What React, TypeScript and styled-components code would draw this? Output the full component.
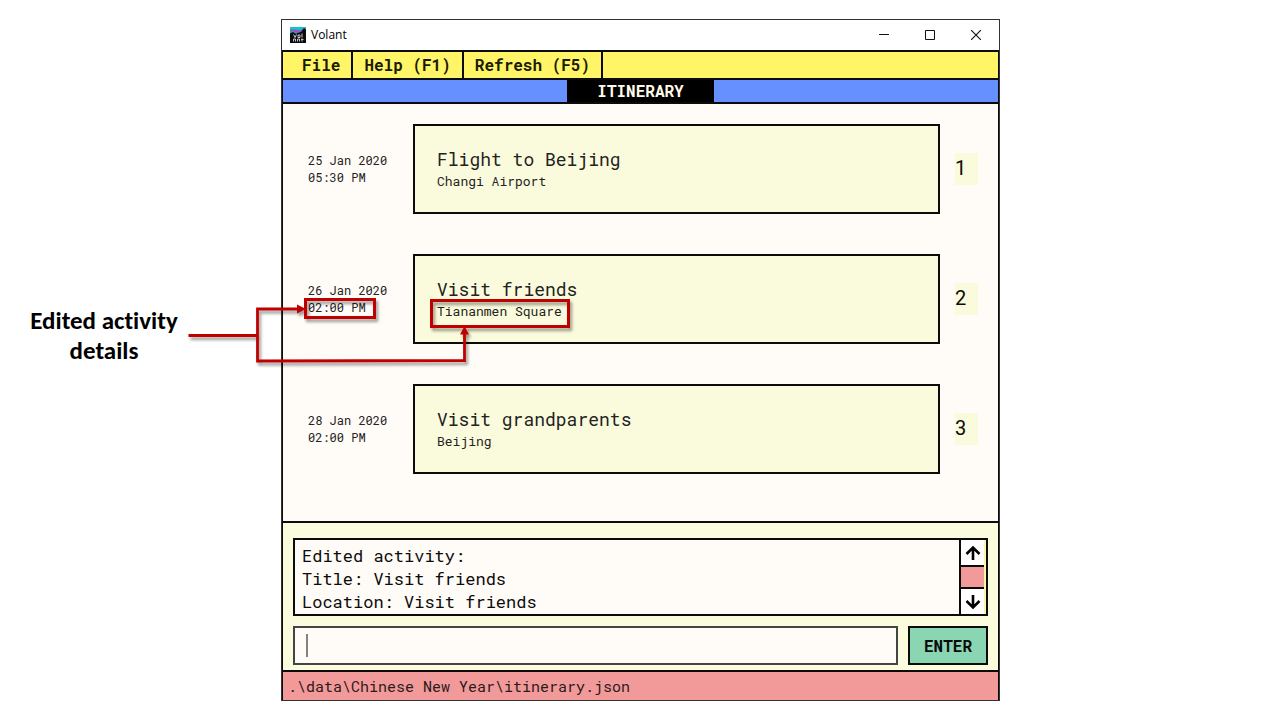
import React from 'react';
import styled, { createGlobalStyle, css } from 'styled-components';

const ink = '#0b0b0b';
const mono = '"Roboto Mono", "DejaVu Sans Mono", monospace';

const GlobalStyle = createGlobalStyle`
  * { box-sizing: border-box; }
  body { margin: 0; background: #fff; }
  button, input { font: inherit; color: inherit; margin: 0; padding: 0; border: 0; border-radius: 0; background: none; }
`;

const Stage = styled.div`
  position: relative;
  display: grid;
  grid-template-columns: 281px minmax(480px, 1fr) 280px;
  padding: 19px 0;
`;

const Note = styled.p`
  align-self: start;
  width: 160px;
  margin: 287px 0 0 24px;
  font: bold 25px/30px Calibri, Carlito, Lato, sans-serif;
  font-variant-ligatures: none;
  color: #000;
  text-align: center;
`;

const Window = styled.main`
  border: 1px solid #333;
  background: #fff;
  font-family: ${mono};
  color: ${ink};
`;

const TitleBar = styled.header`
  display: flex;
  align-items: center;
  height: 30px;
  padding-left: 8px;
`;

const AppName = styled.h1`
  flex: 1;
  margin: 0 0 0 5px;
  font: 12px/20px "Segoe UI", "Open Sans", sans-serif;
  color: #000;
`;

const WindowButton = styled.button`
  display: grid;
  place-items: center;
  width: 46px;
  height: 28px;
`;

const Body = styled.div`
  border: solid ${ink};
  border-width: 2px 1px 0;
`;

const MenuBar = styled.nav`
  display: flex;
  height: 28px;
  padding-left: 8px;
  border-bottom: 2px solid ${ink};
  background: #fff566;
`;

const MenuItem = styled.button`
  padding: 0 11px;
  border-right: 2px solid ${ink};
  font-size: 16px;
  line-height: 26px;
  font-weight: bold;
  color: #1c1a08;
`;

const TabStrip = styled.div`
  display: flex;
  justify-content: center;
  height: 24px;
  border-bottom: 2px solid ${ink};
  background: #6690ff;
`;

const Tab = styled.h2`
  margin: 0;
  padding: 0 30px;
  background: #000;
  color: #fffbe6;
  font-size: 16px;
  line-height: 22px;
  font-weight: bold;
`;

const List = styled.ol`
  margin: 0;
  padding: 0 20px 27px 25px;
  list-style: none;
  background: #fffbf7;
`;

const Row = styled.li`
  display: grid;
  grid-template-columns: 105px 1fr 23px;
  align-items: center;
  padding: 20px 0;
`;

const When = styled.time`
  font-size: 12px;
  line-height: 17px;
  white-space: pre-line;
  color: #222;
`;

const Card = styled.article`
  display: flex;
  flex-direction: column;
  justify-content: center;
  height: 90px;
  margin-right: 15px;
  padding: 0 22px;
  border: 2px solid ${ink};
  background: #fafbdc;
  color: #222;
`;

const CardTitle = styled.h3`
  margin: 0;
  font-size: 18px;
  line-height: 24px;
  font-weight: normal;
`;

const Place = styled.p`
  margin: 0;
  font-size: 13px;
  line-height: 20px;
`;

const Index = styled.span`
  height: 32px;
  background: #fafbdc;
  font: 20px/30px Roboto, sans-serif;
`;

const Console = styled.section`
  display: grid;
  gap: 10px;
  padding: 15px 10px 5px;
  border-top: 2px solid ${ink};
  background: #fbfcdd;
`;

const ResultBox = styled.div`
  display: flex;
  height: 78px;
  border: 2px solid ${ink};
  background: #fffbf7;
  overflow: hidden;
`;

const Result = styled.output`
  flex: 1;
  padding: 4px 7px;
  font-size: 17px;
  line-height: 23px;
  white-space: pre-line;
`;

const ScrollBar = styled.div`
  display: flex;
  flex-direction: column;
  width: 27px;
  border-left: 2px solid ${ink};
  border-right: 2px solid #fbf5a5;
  background: #fff;
`;

const ScrollButton = styled.button`
  display: grid;
  place-items: center;
  flex: 1;
`;

const Thumb = styled.div`
  height: 24px;
  border: solid ${ink};
  border-width: 2px 0;
  background: #f29999;
`;

const CommandLine = styled.form`
  display: flex;
  gap: 10px;
  height: 39px;
`;

const boxed = css`
  border: 2px solid ${ink};
`;

const CommandBox = styled.label`
  ${boxed}
  display: flex;
  flex: 1;
  align-items: center;
  gap: 2px;
  padding-left: 11px;
  border-color: #444;
  background: #fffbf7;
`;

const Caret = styled.span`
  width: 2px;
  height: 23px;
  background: #858380;
`;

const CommandInput = styled.input`
  flex: 1;
  min-width: 0;
  height: 100%;
  font-size: 17px;
  outline: none;
`;

const EnterButton = styled.button`
  && { ${boxed} }
  width: 80px;
  background: #8ad5b2;
  font-size: 16px;
  font-weight: bold;
`;

const StatusBar = styled.footer`
  padding: 0 5px;
  border-top: 2px solid ${ink};
  background: #f29999;
  font-size: 15px;
  line-height: 28px;
  color: #2a1a1a;
  white-space: nowrap;
  overflow: hidden;
`;

const Callout = styled.svg`
  position: absolute;
  top: 0;
  left: 0;
  pointer-events: none;
`;

const activities = [
  { date: '25 Jan 2020', time: '05:30 PM', title: 'Flight to Beijing', place: 'Changi Airport' },
  { date: '26 Jan 2020', time: '02:00 PM', title: 'Visit friends', place: 'Tiananmen Square' },
  { date: '28 Jan 2020', time: '02:00 PM', title: 'Visit grandparents', place: 'Beijing' },
];

const Logo = () => (
  <svg width="16" height="16" viewBox="0 0 16 16" aria-hidden="true">
    <path d="M0 0h16v16H0z" fill="#0c0c10" />
    <path d="M0 0h16v4l-4 2H0z" fill="#10c4c8" />
    <path d="M0 2.500h5l4 1 4-1.500v2L9 6H6L3 4.500H0z" fill="#a04fc0" />
    <path d="M0 4.500h3L7 6v1.500H0z" fill="#18a9b5" />
    <path d="M0 6.500L3 5l3 2 3-1.500L11 5l3-4 2 1.500V16H0z" fill="#0c0c10" />
    <path d="M3.500 7.500L5 10.500l1.500-3M8 8h2v2.500H8zM12 6.500v4M3.500 14.500v-2.500h2v2.500M7.500 14.500v-2.500h2v2.500M12 11.500v3M11 12.500h2.500" fill="none" stroke="#c4c4c4" />
  </svg>
);

const ScrollArrow = ({ down }: { down?: boolean }) => (
  <svg width="16" height="16" viewBox="0 0 16 16" aria-hidden="true">
    <path
      d={down ? 'M8 1v12M1.500 7l6.500 6.500L14.500 7' : 'M8 15V3M1.500 9L8 2.500L14.500 9'}
      fill="none"
      stroke="#000"
      strokeWidth="2.600"
    />
  </svg>
);

const EditCallout = () => (
  <Callout width="600" height="400" viewBox="0 0 600 400" aria-hidden="true">
    <defs>
      <filter id="shade" x="-10%" y="-10%" width="120%" height="120%">
        <feDropShadow dx="2" dy="3" stdDeviation="1.500" floodColor="#000" floodOpacity=".4" />
      </filter>
    </defs>
    <g filter="url(#shade)" fill="none" stroke="#c00000" strokeWidth="3">
      <rect x="305.500" y="299.500" width="69" height="18" />
      <rect x="431.500" y="300.500" width="137" height="26" />
      <path d="M188.500 335.500H257.500M298 309H257.500V361L464.500 360.500V333" strokeWidth="2.800" />
      <path d="M297 304.500L306 309L297 313.500zM460 334.500L464.500 326L469 334.500z" fill="#c00000" stroke="none" />
    </g>
  </Callout>
);

export default function App() {
  return (
    <>
      <GlobalStyle />
      <Stage>
        <Note>Edited activity details</Note>
        <Window>
          <TitleBar>
            <Logo />
            <AppName>Volant</AppName>
            <WindowButton aria-label="Minimize">
              <svg width="10" height="10"><path d="M0 4.500h10" stroke="#111" /></svg>
            </WindowButton>
            <WindowButton aria-label="Maximize">
              <svg width="10" height="10"><path d="M.5.5h9v9h-9z" fill="none" stroke="#111" /></svg>
            </WindowButton>
            <WindowButton aria-label="Close">
              <svg width="10" height="10"><path d="M0 0l10 10M10 0l-10 10" stroke="#111" strokeWidth="1.100" /></svg>
            </WindowButton>
          </TitleBar>
          <Body>
            <MenuBar>
              <MenuItem>File</MenuItem>
              <MenuItem>Help (F1)</MenuItem>
              <MenuItem>Refresh (F5)</MenuItem>
            </MenuBar>
            <TabStrip>
              <Tab>ITINERARY</Tab>
            </TabStrip>
            <List>
              {activities.map((a, i) => (
                <Row key={a.title}>
                  <When>{`${a.date}\n${a.time}`}</When>
                  <Card>
                    <CardTitle>{a.title}</CardTitle>
                    <Place>{a.place}</Place>
                  </Card>
                  <Index>{i + 1}</Index>
                </Row>
              ))}
            </List>
            <Console>
              <ResultBox>
                <Result>{'Edited activity:\nTitle: Visit friends\nLocation: Visit friends'}</Result>
                <ScrollBar>
                  <ScrollButton aria-label="Scroll up"><ScrollArrow /></ScrollButton>
                  <Thumb />
                  <ScrollButton aria-label="Scroll down"><ScrollArrow down /></ScrollButton>
                </ScrollBar>
              </ResultBox>
              <CommandLine onSubmit={(e) => e.preventDefault()}>
                <CommandBox>
                  <Caret />
                  <CommandInput type="text" aria-label="Command" />
                </CommandBox>
                <EnterButton type="submit">ENTER</EnterButton>
              </CommandLine>
            </Console>
            <StatusBar>{'.\\data\\Chinese New Year\\itinerary.json'}</StatusBar>
          </Body>
        </Window>
        <EditCallout />
      </Stage>
    </>
  );
}
